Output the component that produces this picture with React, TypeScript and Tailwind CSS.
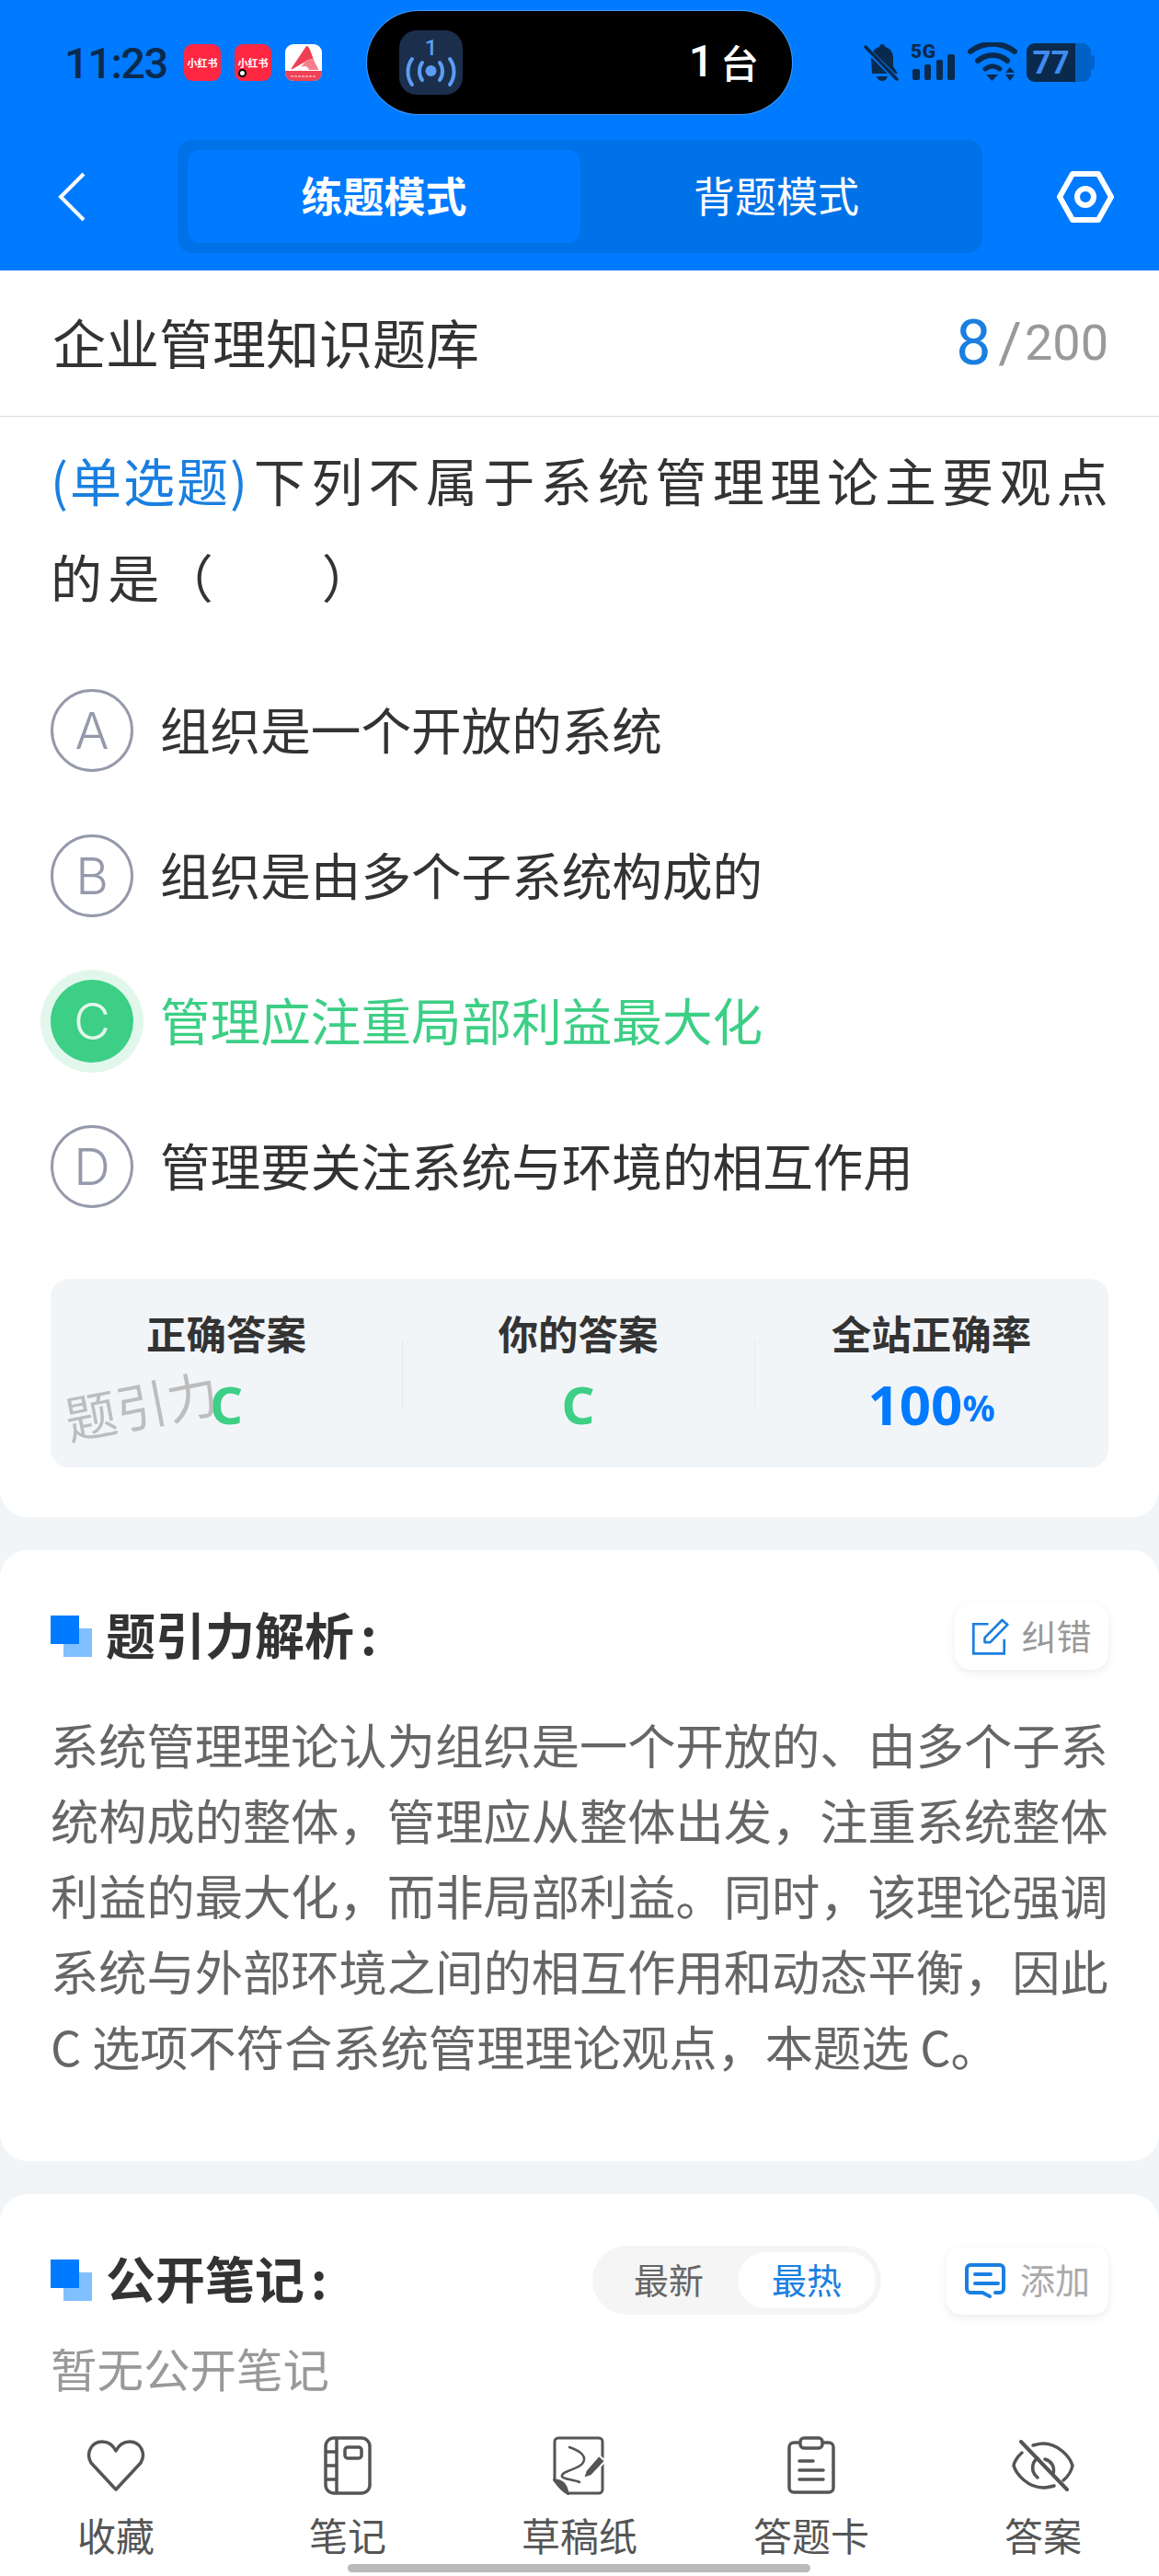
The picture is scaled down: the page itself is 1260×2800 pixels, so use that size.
import React from "react";

const CJK = "font-['Noto_Sans_CJK_SC','Noto_Sans',sans-serif]";

function Bell() {
  return (
    <svg width="40" height="42" viewBox="0 0 40 42" fill="#0a2a4d">
      <path d="M20 1c2 0 3 1 3.400 3C29 5.500 32 10 32 16v9l5 8H9L8 14c1-5 5-9 9-10 .4-2 1.500-3 3-3z" />
      <path d="M14 36h12c-1 3-3 5-6 5s-5-2-6-5z" />
      <path d="M2 5l35 35" stroke="#007aff" strokeWidth="6" />
      <path d="M2 4l34 35" stroke="#0a2a4d" strokeWidth="3.500" strokeLinecap="round" />
    </svg>
  );
}

function Signal() {
  return (
    <svg width="50" height="44" viewBox="0 0 50 44" fill="#0a2a4d">
      <text x="1" y="17" fontSize="21" fontWeight="900" fontFamily="'Roboto',sans-serif" textLength="27">5G</text>
      <rect x="3" y="29" width="8" height="12" rx="2" />
      <rect x="16" y="24" width="7" height="17" rx="2" />
      <rect x="29" y="19" width="7" height="22" rx="2" />
      <rect x="41" y="13" width="8" height="28" rx="2" />
    </svg>
  );
}

function Wifi() {
  return (
    <svg width="54" height="44" viewBox="0 0 54 44" fill="none" stroke="#0a2a4d" strokeLinecap="round">
      <path d="M3 10C17-1 37-1 51 10" strokeWidth="6" />
      <path d="M11 20c10-8 23-8 32 0" strokeWidth="6" />
      <path d="M19 29c5-4 11-4 16 0" strokeWidth="5" />
      <path d="M20 35h13l-6.500 7z" fill="#0a2a4d" stroke="none" />
      <path d="M46 27l5 6H41zM41 35h10l-5 7z" fill="#0a2a4d" stroke="none" />
    </svg>
  );
}

function Battery() {
  return (
    <div className="flex items-center">
      <div className="flex h-[42px] w-[70px] overflow-hidden rounded-[9px] bg-[#0062c8]">
        <div className="flex h-full w-[53px] items-center justify-center bg-[#0a2a4d] text-[35px] font-bold leading-none text-[#3f8cf0] font-['Roboto',sans-serif]">
          77
        </div>
      </div>
      <div className="h-[16px] w-[4px] rounded-r-[3px] bg-[#0062c8]" />
    </div>
  );
}

function AppIcon({ dot }: { dot?: boolean }) {
  return (
    <div className="relative flex h-[40px] w-[40px] items-center justify-center rounded-[9px] bg-[#ff2742] text-[11px] font-bold leading-none text-white">
      小红书
      {dot && <div className="absolute left-[4px] top-[27px] h-[9px] w-[9px] rounded-full border-[2px] border-black bg-white" />}
    </div>
  );
}

function AIcon() {
  return (
    <svg width="40" height="40" viewBox="0 0 40 40">
      <rect width="40" height="40" rx="9" fill="#fff" />
      <path d="M0 29h40v2a9 9 0 0 1-9 9H9a9 9 0 0 1-9-9z" fill="#ef4257" />
      <path d="M6 33h28" stroke="#f9b4bd" strokeWidth="1.500" strokeDasharray="3 1" transform="translate(0 2)" />
      <path d="M23 2c2 0 3 2 4 4l4 11c-4-1-7 0-9 2L8 27c-1 1-2 0-1-1z" fill="#ee3f55" />
      <path d="M31 17l5 10c0 1 0 1-1 1H26c-1-4-5-5-9-3l5-6c2-2 5-3 9-2z" fill="#f5808d" />
    </svg>
  );
}

function Broadcast() {
  return (
    <svg width="70" height="70" viewBox="0 0 70 70" fill="none">
      <rect width="69" height="70" rx="19" fill="#1b2f4c" />
      <text x="34.500" y="27" textAnchor="middle" fontSize="24" fontWeight="500" fill="#5b9df5" fontFamily="'Roboto',sans-serif">1</text>
      <circle cx="34.500" cy="44" r="6" fill="#5b9df5" />
      <path d="M25 35c-4 5-4 14 0 19M44 35c4 5 4 14 0 19" stroke="#5b9df5" strokeWidth="4" strokeLinecap="round" />
      <path d="M14 31c-6 8-6 20 0 28M55 31c6 8 6 20 0 28" stroke="#5b9df5" strokeWidth="4" strokeLinecap="round" />
    </svg>
  );
}

function SectionIcon() {
  return (
    <div className="relative h-[45px] w-[45px] shrink-0">
      <div className="absolute bottom-0 right-0 h-[31px] w-[31px] bg-[#82bfff]" />
      <div className="absolute left-0 top-0 h-[31px] w-[31px] bg-[#007aff]" />
    </div>
  );
}

function SectionTitle({ text }: { text: string }) {
  return (
    <div className="ml-[15px] -mt-[5px] flex items-center text-[54px] font-bold leading-none text-[#333333]">
      {text}
      <span className="ml-[7px]">:</span>
    </div>
  );
}

function Option({ letter, text, active }: { letter: string; text: string; active?: boolean }) {
  return (
    <div className="flex h-[158px] items-center pl-[55px]">
      {active ? (
        <div className="flex h-[90px] w-[90px] items-center justify-center rounded-full bg-[#3ccf85] text-[55px] font-light leading-none text-[#e2f7ec] shadow-[0_0_0_11px_#e2f7ec] font-['Inter',sans-serif]">
          {letter}
        </div>
      ) : (
        <div className="flex h-[90px] w-[90px] items-center justify-center rounded-full border-[3px] border-[#9599ab] text-[55px] font-light leading-none text-[#9599ab] font-['Inter',sans-serif]">
          {letter}
        </div>
      )}
      <div className={`ml-[29px] -mt-[3px] text-[54.600px] leading-none ${active ? "text-[#3ccf85]" : "text-[#333333]"}`}>{text}</div>
    </div>
  );
}

function Stat({ label, children }: { label: string; children: React.ReactNode }) {
  return (
    <div className="flex flex-col items-center">
      <div className="text-[43.500px] font-bold leading-[48px] text-[#333333]">{label}</div>
      <div className="mt-[27px] flex h-[52px] items-center font-['Noto_Sans',sans-serif] font-bold">{children}</div>
    </div>
  );
}

function ToolItem({ label, children }: { label: string; children: React.ReactNode }) {
  return (
    <div className="flex w-[252px] flex-col items-center">
      <div className="flex h-[66px] items-center justify-center">{children}</div>
      <div className="mt-[18px] text-[42px] leading-[48px] text-[#555555]">{label}</div>
    </div>
  );
}

export default function App() {
  return (
    <div className={`flex h-[2800px] w-[1260px] flex-col overflow-hidden bg-[#f2f5f8] ${CJK}`}>
      <div className="h-[294px] shrink-0 bg-[#007aff]">
        <div className="flex h-[136px] items-center pl-[70px]">
          <div className="w-[130px] text-[47px] font-medium leading-none tracking-[-1.500px] text-[#0a2a4d] font-['Roboto',sans-serif]">11:23</div>
          <div className="flex gap-[15px]">
            <AppIcon />
            <AppIcon dot />
            <AIcon />
          </div>
          <div className="ml-[49px] flex h-[112px] w-[462px] items-center justify-between rounded-full bg-black pl-[35px] pr-[36px] shadow-[0_0_0_1px_rgba(255,255,255,0.25)]">
            <Broadcast />
            <div className="-mt-[2px] flex items-center leading-none text-white">
              <span className="font-['Roboto',sans-serif] text-[48px] font-medium leading-none">1</span>
              <span className="ml-[7px] text-[42px] font-medium leading-none">台</span>
            </div>
          </div>
          <div className="ml-[78px] flex items-center">
            <Bell />
            <div className="ml-[10px]"><Signal /></div>
            <div className="ml-[13px]"><Wifi /></div>
            <div className="ml-[10px]"><Battery /></div>
          </div>
        </div>
        <div className="mt-[16px] flex items-center">
          <svg className="ml-[62px]" width="32" height="54" viewBox="0 0 32 54" fill="none">
            <path d="M29 2L4 27l25 25" stroke="#fff" strokeWidth="4" />
          </svg>
          <div className="ml-[99px] flex h-[123px] w-[875px] items-center rounded-[16px] bg-[#0072e8] px-[11px]">
            <div className="flex h-[101px] w-[427px] items-center justify-center rounded-[14px] bg-[#007aff] pb-[4px] text-[45px] font-bold text-white">练题模式</div>
            <div className="flex h-[101px] flex-1 items-center justify-center pb-[4px] text-[45px] text-white">背题模式</div>
          </div>
          <svg className="ml-[81px]" width="62" height="56" viewBox="0 0 62 56" fill="none">
            <path d="M17 3h28l14 25-14 25H17L3 28z" stroke="#fff" strokeWidth="6" strokeLinejoin="round" />
            <circle cx="31" cy="28" r="9" stroke="#fff" strokeWidth="6" />
          </svg>
        </div>
      </div>

      <div className="h-[1355px] shrink-0 rounded-b-[30px] bg-white">
        <div className="flex h-[159px] items-center justify-between border-b border-[#d9d9d9] pl-[57px] pr-[55px]">
          <div className="-mt-[4px] text-[58px] leading-none text-[#333333]">企业管理知识题库</div>
          <div className="flex items-center font-['Roboto',sans-serif] text-[#999999]">
            <span className="text-[68px] leading-none text-[#1a7fe0]">8</span>
            <span className="ml-[8px] text-[62px] leading-none">/</span>
            <span className="ml-[3px] text-[54px] leading-none">200</span>
          </div>
        </div>
        <div className="pl-[55px] pr-[40px] pt-[15px] text-[56px] leading-[105px] tracking-[6.350px] text-[#333333]">
          <span className="mr-[5px] tracking-[2px] text-[#1a7fe0]">(单选题)</span>下列不属于系统管理理论主要观点的是<span className="-ml-[4px] tracking-[2px]">（　　）</span>
        </div>
        <div className="mt-[37px]">
          <Option letter="A" text="组织是一个开放的系统" />
          <Option letter="B" text="组织是由多个子系统构成的" />
          <Option letter="C" text="管理应注重局部利益最大化" active />
          <Option letter="D" text="管理要关注系统与环境的相互作用" />
        </div>
        <div className="relative mx-[55px] mt-[43px] grid h-[205px] grid-cols-[382px_383px_385px] rounded-[20px] bg-[#f2f5f8] pt-[35px]">
          <Stat label="正确答案"><span className="text-[56px] leading-none text-[#3ccf85]">C</span></Stat>
          <Stat label="你的答案"><span className="text-[56px] leading-none text-[#3ccf85]">C</span></Stat>
          <Stat label="全站正确率">
            <span className="text-[60px] leading-none text-[#007aff]">100</span>
            <span className="mt-[6px] text-[39px] leading-none text-[#007aff]">%</span>
          </Stat>
          <div className="absolute left-[382px] top-[67px] h-[73px] w-px bg-[#e4e8ec]" />
          <div className="absolute left-[765px] top-[67px] h-[73px] w-px bg-[#e4e8ec]" />
          <div className="absolute left-[16px] top-[124px] origin-left -rotate-[11deg] text-[56px] leading-none text-[#bdbdbd]">题引力</div>
        </div>
      </div>

      <div className="mt-[36px] h-[664px] shrink-0 rounded-[30px] bg-white px-[55px] pt-[57px]">
        <div className="flex h-[73px] items-center justify-between">
          <div className="flex items-center">
            <SectionIcon />
            <SectionTitle text="题引力解析" />
          </div>
          <div className="flex h-[73px] w-[167px] items-center justify-center rounded-[18px] bg-white shadow-[0_3px_10px_rgba(0,0,0,0.08)]">
            <svg width="42" height="43" viewBox="125 65 125 130" fill="none" stroke="#1a7fe0" strokeWidth="8">
              <path d="M180 90H131V187H232V140" />
              <path d="M168 135L225 77L243 92L186 150H168Z" strokeLinejoin="round" />
            </svg>
            <span className="ml-[12px] -mt-[4px] text-[38px] leading-none text-[#999999]">纠错</span>
          </div>
        </div>
        <div className="pt-[39px] text-[52.270px] leading-[82px] text-[#666666]">
          系统管理理论认为组织是一个开放的、由多个子系统构成的整体，管理应从整体出发，注重系统整体利益的最大化，而非局部利益。同时，该理论强调系统与外部环境之间的相互作用和动态平衡，因此 C 选项不符合系统管理理论观点，本题选 C。
        </div>
      </div>

      <div className="mt-[36px] flex flex-1 flex-col rounded-t-[30px] bg-white">
        <div className="mt-[56px] flex h-[75px] items-center pl-[55px] pr-[55px]">
          <SectionIcon />
          <SectionTitle text="公开笔记" />
          <div className="ml-auto flex h-[75px] w-[314px] items-center rounded-full bg-[#f5f5f5] pl-[45px] pr-[6px]">
            <span className="-mt-[3px] text-[38px] leading-none text-[#666666]">最新</span>
            <div className="ml-auto flex h-[61px] w-[150px] items-center justify-center rounded-full bg-white pb-[3px] text-[38px] leading-none text-[#1a7fe0]">最热</div>
          </div>
          <div className="ml-[71px] flex h-[74px] w-[176px] items-center justify-center rounded-[16px] bg-white shadow-[0_3px_10px_rgba(0,0,0,0.08)]">
            <svg width="44" height="38" viewBox="0 0 44 38" fill="none" stroke="#1a7fe0" strokeWidth="4" strokeLinecap="round" strokeLinejoin="round">
              <path d="M19 32H6a4 4 0 0 1-4-4V6a4 4 0 0 1 4-4h32a4 4 0 0 1 4 4v22a4 4 0 0 1-4 4h-5" />
              <path d="M19 32l8 4" />
              <path d="M11 12h17M11 22h25" />
            </svg>
            <span className="ml-[16px] -mt-[3px] text-[38px] leading-none text-[#aaaaaa]">添加</span>
          </div>
        </div>
        <div className="ml-[55px] mt-[27px] text-[50.500px] leading-[60px] text-[#999999]">暂无公开笔记</div>
        <div className="mt-[44px] flex">
          <ToolItem label="收藏">
            <svg width="64" height="56" viewBox="0 0 64 56" fill="none" stroke="#555555" strokeWidth="3.500" strokeLinejoin="round">
              <path d="M32 54L5 25C-1 15 5 2 17 2c7 0 12 4 15 10 3-6 8-10 15-10 12 0 18 13 12 23z" />
            </svg>
          </ToolItem>
          <ToolItem label="笔记">
            <svg width="52" height="64" viewBox="0 0 52 64" fill="none" stroke="#555555" strokeWidth="3.500" strokeLinejoin="round">
              <rect x="2" y="2" width="48" height="60" rx="9" />
              <path d="M14 2v60M2 17h12M2 32h12M2 47h12" />
              <rect x="23" y="12" width="18" height="12" rx="3" />
            </svg>
          </ToolItem>
          <ToolItem label="草稿纸">
            <svg width="58" height="64" viewBox="0 0 58 64" fill="none" stroke="#555555" strokeWidth="3">
              <path d="M16 62h34a4 4 0 0 0 4-4V6a4 4 0 0 0-4-4H6a4 4 0 0 0-4 4v42z" strokeLinejoin="round" />
              <path d="M2 48c6 0 12 2 14 14-4-2-10-8-14-14z" fill="#555555" />
              <path d="M18 12C30 16 38 22 32 30 26 37 8 38 10 44 12 47 22 47 29 50" strokeLinecap="round" strokeWidth="2.500" />
              <path d="M33 46l3-9L50 21l7 6L42 43z" fill="#555555" stroke="#ffffff" strokeWidth="2" />
            </svg>
          </ToolItem>
          <ToolItem label="答题卡">
            <svg width="54" height="64" viewBox="0 0 54 64" fill="none" stroke="#555555" strokeWidth="3.500" strokeLinecap="round">
              <path d="M13 7H8a5 5 0 0 0-5 5v44a5 5 0 0 0 5 5h38a5 5 0 0 0 5-5V12a5 5 0 0 0-5-5h-5" />
              <rect x="15" y="2" width="24" height="11" rx="4" />
              <path d="M14 27h15M14 37h26M14 47h26" />
            </svg>
          </ToolItem>
          <ToolItem label="答案">
            <svg width="68" height="56" viewBox="0 0 68 56" fill="none" stroke="#555555" strokeWidth="3.500" strokeLinecap="round">
              <path d="M11 14C5 19 2 26 2 28c3 10 16 24 32 24 4 0 8-1 12-2M23 6c4-1 7-2 11-2 16 0 29 14 32 24-1 5-5 12-10 16" />
              <path d="M28 20c-6 4-7 12-3 18 1 1 2 2 3 3M36 21c7 2 11 8 9 16" />
              <path d="M10 2l50 52" strokeWidth="4" />
            </svg>
          </ToolItem>
        </div>
        <div className="ml-[378px] mt-[8px] h-[9px] w-[503px] shrink-0 rounded-full bg-[#bbbbbb]" />
      </div>
    </div>
  );
}
